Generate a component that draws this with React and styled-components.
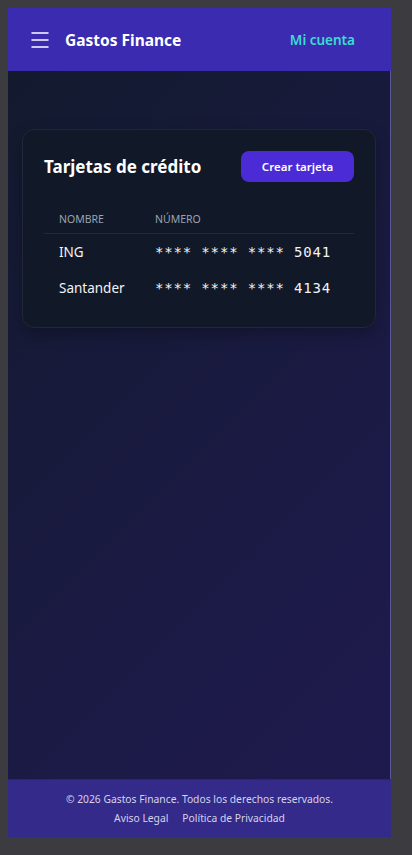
import styled, { createGlobalStyle } from "styled-components";
import { Menu } from "lucide-react";

const GlobalStyle = createGlobalStyle`
  body {
    margin: 8px;
    background: #3c3b3f;
    font-family: "Noto Sans", "Open Sans", sans-serif;
  }
`;

const Frame = styled.div`
  width: 383px;
  height: 829px;
  display: flex;
  flex-direction: column;
`;

const Header = styled.header`
  height: 63px;
  flex-shrink: 0;
  background: #3a2bb0;
  display: flex;
  align-items: center;
  padding: 0 36px 0 20px;
`;

const MenuButton = styled.button`
  background: none;
  border: none;
  padding: 0;
  color: #ffffff;
  display: flex;
  margin-right: 13px;
`;

const Brand = styled.span`
  color: #ffffff;
  font-weight: 700;
  font-size: 15.5px;
`;

const Account = styled.a`
  margin-left: auto;
  color: #3ddbd0;
  font-weight: 600;
  font-size: 13.5px;
`;

const Main = styled.main`
  flex: 1;
  background: linear-gradient(135deg, #131a2e 0%, #1b1a44 60%, #1f1a4e 100%);
  border-right: 1px solid #5b5695;
  padding: 58px 14px 0 14px;
`;

const Card = styled.section`
  background: #111827;
  border: 1px solid #1f2838;
  border-radius: 12px;
  padding: 21px 21px 21px;
  box-shadow: 0 6px 16px rgba(0, 0, 0, 0.25);
`;

const CardHead = styled.div`
  display: flex;
  align-items: center;
  justify-content: space-between;
  margin-bottom: 30px;
`;

const Title = styled.h2`
  margin: 0;
  color: #ffffff;
  font-size: 17px;
  font-weight: 700;
`;

const CreateButton = styled.button`
  width: 113px;
  height: 31px;
  border: none;
  border-radius: 8px;
  background: #4a2bd6;
  color: #ffffff;
  font-family: inherit;
  font-weight: 600;
  font-size: 11.5px;
`;

const Table = styled.table`
  width: 100%;
  border-collapse: collapse;
`;

const Th = styled.th`
  text-align: left;
  font-weight: 400;
  font-size: 10.5px;
  line-height: 15px;
  color: #9aa3b2;
  text-transform: uppercase;
  padding: 0 0 6px ${(p) => (p.first ? "15px" : "0")};
  border-bottom: 1px solid #1f2a3a;
  width: ${(p) => (p.first ? "96px" : "auto")};
`;

const Td = styled.td`
  color: #f3f4f6;
  font-size: ${(p) => (p.mono ? "14px" : "13.5px")};
  height: 36px;
  line-height: 36px;
  padding: 0 0 0 ${(p) => (p.mono ? "0" : "15px")};
  font-family: ${(p) => (p.mono ? '"DejaVu Sans Mono", monospace' : "inherit")};
  letter-spacing: ${(p) => (p.mono ? "0.06em" : "normal")};
  white-space: nowrap;
`;

const Footer = styled.footer`
  height: 57px;
  flex-shrink: 0;
  background: #332a8a;
  border-top: 1px solid #2c2670;
  display: flex;
  flex-direction: column;
  align-items: center;
  justify-content: center;
  gap: 5px;
  color: #d6d3ea;
  font-size: 10.3px;
`;

const Links = styled.div`
  display: flex;
  gap: 14px;
`;

const cards = [
  { name: "ING", last: "5041" },
  { name: "Santander", last: "4134" },
];

export default function App() {
  return (
    <>
      <GlobalStyle />
      <Frame>
        <Header>
          <MenuButton>
            <Menu size={24} strokeWidth={1.5} />
          </MenuButton>
          <Brand>Gastos Finance</Brand>
          <Account>Mi cuenta</Account>
        </Header>
        <Main>
          <Card>
            <CardHead>
              <Title>Tarjetas de crédito</Title>
              <CreateButton>Crear tarjeta</CreateButton>
            </CardHead>
            <Table>
              <thead>
                <tr>
                  <Th first>Nombre</Th>
                  <Th>Número</Th>
                </tr>
              </thead>
              <tbody>
                {cards.map((c) => (
                  <tr key={c.name}>
                    <Td>{c.name}</Td>
                    <Td mono>**** **** **** {c.last}</Td>
                  </tr>
                ))}
              </tbody>
            </Table>
          </Card>
        </Main>
        <Footer>
          <span>© 2026 Gastos Finance. Todos los derechos reservados.</span>
          <Links>
            <span>Aviso Legal</span>
            <span>Política de Privacidad</span>
          </Links>
        </Footer>
      </Frame>
    </>
  );
}
